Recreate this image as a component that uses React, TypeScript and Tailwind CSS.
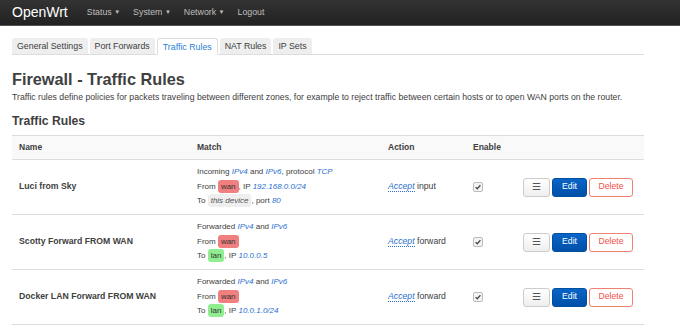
import React from 'react';

const tabs = ['General Settings', 'Port Forwards', 'Traffic Rules', 'NAT Rules', 'IP Sets'];

const Zone: React.FC<{ name: string; color: 'wan' | 'lan' | 'dev' }> = ({ name, color }) => {
  const cls =
    color === 'wan'
      ? 'bg-[#f08080] text-[#333]'
      : color === 'lan'
      ? 'bg-[#90ee90] text-[#333]'
      : 'bg-[#eee] text-[#555] italic';
  return (
    <span className={`inline-block rounded-[3px] px-[3px] leading-[13px] ${cls}`}>{name}</span>
  );
};

const V: React.FC<{ children: React.ReactNode }> = ({ children }) => (
  <span className="italic text-[#2a6fcf]">{children}</span>
);

type Rule = {
  name: string;
  line1: React.ReactNode;
  line2: React.ReactNode;
  line3: React.ReactNode;
  target: string;
};

const rules: Rule[] = [
  {
    name: 'Luci from Sky',
    line1: (
      <>
        Incoming <V>IPv4</V> and <V>IPv6</V>, protocol <V>TCP</V>
      </>
    ),
    line2: (
      <>
        From <Zone name="wan" color="wan" />, IP <V>192.168.0.0/24</V>
      </>
    ),
    line3: (
      <>
        To <Zone name="this device" color="dev" />, port <V>80</V>
      </>
    ),
    target: 'input',
  },
  {
    name: 'Scotty Forward FROM WAN',
    line1: (
      <>
        Forwarded <V>IPv4</V> and <V>IPv6</V>
      </>
    ),
    line2: (
      <>
        From <Zone name="wan" color="wan" />
      </>
    ),
    line3: (
      <>
        To <Zone name="lan" color="lan" />, IP <V>10.0.0.5</V>
      </>
    ),
    target: 'forward',
  },
  {
    name: 'Docker LAN Forward FROM WAN',
    line1: (
      <>
        Forwarded <V>IPv4</V> and <V>IPv6</V>
      </>
    ),
    line2: (
      <>
        From <Zone name="wan" color="wan" />
      </>
    ),
    line3: (
      <>
        To <Zone name="lan" color="lan" />, IP <V>10.0.1.0/24</V>
      </>
    ),
    target: 'forward',
  },
];

const cols = 'grid grid-cols-[178px_191px_85px_50px_128px]';

const App: React.FC = () => {
  return (
    <div className="min-h-screen bg-white font-['Liberation_Sans',Arial,sans-serif] text-[#404040]">
      <nav className="h-[26px] bg-gradient-to-b from-[#333] to-[#222] border-b border-[#555] flex items-center px-[12px]">
        <span className="text-white text-[14px] mr-[19px]">OpenWrt</span>
        <div className="flex gap-[13px] text-[8.8px] text-[#bfbfbf]">
          <span>
            Status <span className="text-[6px] align-middle">▼</span>
          </span>
          <span>
            System <span className="text-[6px] align-middle">▼</span>
          </span>
          <span>
            Network <span className="text-[6px] align-middle">▼</span>
          </span>
          <span>Logout</span>
        </div>
      </nav>

      <div className="px-[12px] w-[656px]">
        <div className="mt-[12px] flex gap-[2px] border-b border-[#ddd] text-[8.8px]">
          {tabs.map((t) =>
            t === 'Traffic Rules' ? (
              <span
                key={t}
                className="h-[17px] px-[5px] leading-[16px] bg-white border border-[#ddd] border-b-white -mb-px rounded-t-[3px] text-[#2a7fd6]"
              >
                {t}
              </span>
            ) : (
              <span
                key={t}
                className="h-[16px] px-[5px] leading-[16px] bg-[#eee] rounded-t-[3px] text-[#404040]"
              >
                {t}
              </span>
            )
          )}
        </div>

        <h2 className="mt-[14px] text-[16.3px] font-bold leading-[20px] text-[#404040]">
          Firewall - Traffic Rules
        </h2>
        <p className="text-[8.7px] leading-[11px] mt-[3px] text-[#404040] whitespace-nowrap">
          Traffic rules define policies for packets traveling between different zones, for example to reject traffic
          between certain hosts or to open WAN ports on the router.
        </p>

        <h3 className="mt-[10px] text-[12.2px] font-bold leading-[16px] text-[#404040]">Traffic Rules</h3>

        <div className="mt-[6px] text-[8px]">
          <div className={`${cols} h-[25px] items-center bg-[#f9f9f9] border-t border-b border-[#ddd] font-bold text-[8.5px]`}>
            <div className="pl-[7px]">Name</div>
            <div className="pl-[7px]">Match</div>
            <div className="pl-[7px]">Action</div>
            <div className="pl-[7px]">Enable</div>
            <div />
          </div>
          {rules.map((r) => (
            <div key={r.name} className={`${cols} h-[55px] items-center border-b border-[#ddd]`}>
              <div className="pl-[7px] font-bold text-[8.7px]">{r.name}</div>
              <div className="pl-[7px] leading-[14.5px]">
                <div>{r.line1}</div>
                <div>{r.line2}</div>
                <div>{r.line3}</div>
              </div>
              <div className="pl-[7px] text-[8.7px]">
                <span className="italic text-[#2a6fcf] border-b border-dotted border-[#2a6fcf]">Accept</span>{' '}
                {r.target}
              </div>
              <div className="pl-[7px] flex">
                <span className="inline-flex h-[10px] w-[10px] items-center justify-center rounded-[2px] border border-[#bbb] bg-[#f4f4f4]">
                  <svg viewBox="0 0 10 10" className="h-[8px] w-[8px]">
                    <path d="M2 5.2 L4 7.2 L8 2.8" fill="none" stroke="#444" strokeWidth="1.5" />
                  </svg>
                </span>
              </div>
              <div className="flex justify-end gap-[2px] pr-[11px]">
                <button className="h-[19px] w-[27px] rounded-[3px] border border-[#ccc] bg-gradient-to-b from-white to-[#eee] text-[10px] text-[#555] leading-none">
                  ☰
                </button>
                <button className="h-[19px] w-[35px] rounded-[3px] border border-[#0050a0] bg-gradient-to-b from-[#0a64c8] to-[#0050a8] text-[8.7px] text-white">
                  Edit
                </button>
                <button className="h-[19px] w-[44px] rounded-[3px] border border-[#f08070] bg-white text-[8.7px] text-[#f0504a]">
                  Delete
                </button>
              </div>
            </div>
          ))}
        </div>
      </div>
    </div>
  );
};

export default App;
